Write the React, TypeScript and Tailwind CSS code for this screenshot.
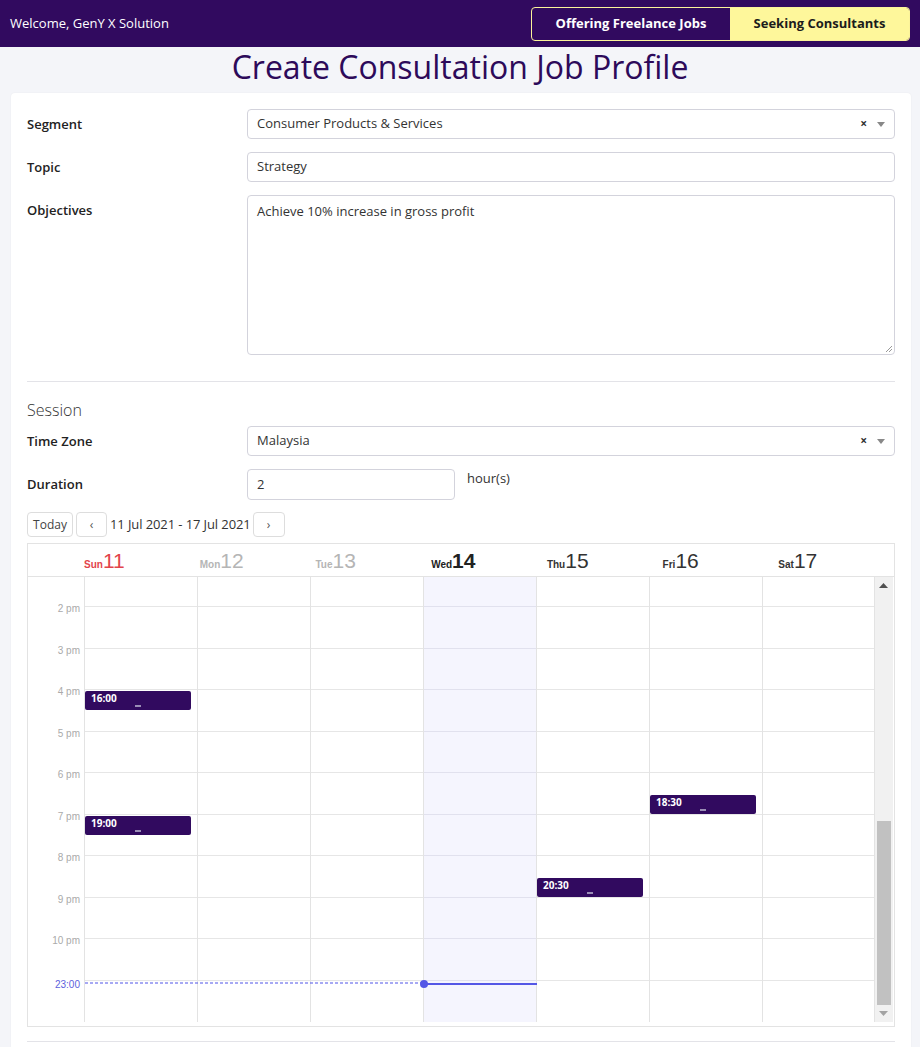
import React from "react";

const days = [
  { d: "Sun", n: "11", cls: "text-[#e2444b]", nCls: "font-light" },
  { d: "Mon", n: "12", cls: "text-[#b5b5b5]", nCls: "font-light" },
  { d: "Tue", n: "13", cls: "text-[#b5b5b5]", nCls: "font-light" },
  { d: "Wed", n: "14", cls: "text-[#222]", nCls: "font-bold" },
  { d: "Thu", n: "15", cls: "text-[#333]", nCls: "font-light" },
  { d: "Fri", n: "16", cls: "text-[#333]", nCls: "font-light" },
  { d: "Sat", n: "17", cls: "text-[#333]", nCls: "font-light" },
];

const hours = ["2 pm", "3 pm", "4 pm", "5 pm", "6 pm", "7 pm", "8 pm", "9 pm", "10 pm"];

const events: Record<number, { t: string; top: number }[]> = {
  0: [
    { t: "16:00", top: 114 },
    { t: "19:00", top: 239 },
  ],
  4: [{ t: "20:30", top: 301 }],
  5: [{ t: "18:30", top: 218 }],
};

function Field({ label, children }: { label: string; children: React.ReactNode }) {
  return (
    <div className="flex">
      <div className="w-[220px] shrink-0 text-[13px] font-semibold text-[#222] leading-[30px]">{label}</div>
      <div className="flex-1">{children}</div>
    </div>
  );
}

function Select({ value }: { value: string }) {
  return (
    <div className="h-[30px] border border-[#d3d3dc] rounded-[4px] flex items-center pl-[9px] pr-[9px] text-[13px] text-[#333]">
      <span className="flex-1">{value}</span>
      <span className="text-[12px] font-bold text-[#333] mr-[10px] leading-none">×</span>
      <svg width="8" height="5" viewBox="0 0 8 5"><path d="M0 0h8L4 5z" fill="#888" /></svg>
    </div>
  );
}

export default function App() {
  return (
    <div className="min-h-[1047px] bg-[#f4f5f9]" style={{ fontFamily: "'Open Sans', sans-serif" }}>
      <div className="h-[47px] bg-[#310a5f] flex items-center justify-between pl-[10px] pr-[10px]">
        <span className="text-white text-[13px] mt-[1px]">Welcome, GenY X Solution</span>
        <div className="flex h-[34px] rounded-[4px] overflow-hidden border border-[#fbf39a]">
          <div className="w-[198px] flex items-center justify-center text-white font-bold text-[13px]">Offering Freelance Jobs</div>
          <div className="w-[179px] flex items-center justify-center bg-[#fef79b] text-[#1c1c1c] font-bold text-[13px]">Seeking Consultants</div>
        </div>
      </div>

      <h1 className="text-center text-[32px] leading-[40px] text-[#2d0a5a] mb-[6px]">Create Consultation Job Profile</h1>

      <div className="ml-[11px] w-[900px] bg-white rounded-[4px] px-[16px] pt-[16px] pb-[10px] shadow-[0_0_2px_rgba(0,0,0,0.06)]">
        <div className="flex flex-col gap-[13px]">
          <Field label="Segment">
            <Select value="Consumer Products & Services" />
          </Field>
          <Field label="Topic">
            <div className="h-[30px] border border-[#d3d3dc] rounded-[4px] flex items-center px-[9px] text-[13px] text-[#333]">Strategy</div>
          </Field>
          <Field label="Objectives">
            <div className="relative h-[160px] border border-[#d3d3dc] rounded-[4px] px-[9px] pt-[6px] text-[13px] text-[#333]">
              Achieve 10% increase in gross profit
              <svg className="absolute right-[1px] bottom-[1px]" width="8" height="8" viewBox="0 0 8 8">
                <path d="M7 1L1 7M7 4L4 7" stroke="#999" strokeWidth="1" />
              </svg>
            </div>
          </Field>
        </div>

        <div className="border-t border-[#e3e3e8] mt-[26px]" />

        <div className="text-[16px] text-[#333] font-light mt-[17px] leading-[22px]">Session</div>

        <div className="flex flex-col gap-[13px] mt-[5px]">
          <Field label="Time Zone">
            <Select value="Malaysia" />
          </Field>
          <Field label="Duration">
            <div className="flex">
              <div className="w-[208px] h-[31px] border border-[#d3d3dc] rounded-[4px] flex items-center px-[9px] text-[13px] text-[#333]">2</div>
              <span className="ml-[12px] text-[13px] text-[#333] leading-[18px]">hour(s)</span>
            </div>
          </Field>
        </div>

        <div className="flex items-center mt-[12px] h-[25px] text-[12px] text-[#333]">
          <button className="h-[25px] w-[46px] border border-[#ddd] rounded-[4px] bg-white text-[12px] text-[#444]">Today</button>
          <button className="ml-[3px] h-[25px] w-[31px] border border-[#ddd] rounded-[4px] bg-white text-[12px] text-[#555] flex items-center justify-center">‹</button>
          <span className="ml-[3px] text-[13px] text-[#333] tracking-[-0.1px]">11 Jul 2021 - 17 Jul 2021</span>
          <button className="ml-[2px] h-[25px] w-[32px] border border-[#ddd] rounded-[4px] bg-white text-[12px] text-[#555] flex items-center justify-center">›</button>
        </div>

        <div className="mt-[6px] border border-[#e3e3e3] h-[484px]" style={{ fontFamily: "'Liberation Sans', Arial, sans-serif" }}>
          <div className="flex h-[33px] border-b border-[#e3e3e3]">
            <div className="w-[56px] shrink-0" />
            {days.map((d) => (
              <div key={d.d} className={`flex-1 flex items-baseline pt-[3px] ${d.cls}`}>
                <span className="text-[10px] font-bold">{d.d}</span>
                <span className={`text-[21px] leading-[28px] ${d.nCls}`}>{d.n}</span>
              </div>
            ))}
          </div>

          <div className="relative flex h-[445px] overflow-hidden">
            <div className="w-[56px] shrink-0 relative">
              <div className="h-[30px]" />
              {hours.map((h) => (
                <div key={h} className="h-[41.5px] text-right pr-[4px] text-[10px] text-[#aaa]">
                  <span className="relative top-[-6px]">{h}</span>
                </div>
              ))}
              <div className="h-[41.5px] text-right pr-[4px] text-[10px] text-[#5d5fdc]">
                <span className="relative top-[-4px]">23:00</span>
              </div>
            </div>
            {days.map((d, i) => (
              <div
                key={d.d}
                className={`relative w-[113px] shrink-0 border-l border-[#e3e3e3] ${i === 3 ? "bg-[#f5f5fe]" : ""} ${i === 6 ? "border-r" : ""}`}
              >
                <div className={`h-[30px] border-b ${i === 3 ? "border-[#e1e1ee]" : "border-[#e6e6e6]"}`} />
                {hours.map((h) => (
                  <div key={h} className={`h-[41.5px] border-b ${i === 3 ? "border-[#e1e1ee]" : "border-[#e6e6e6]"}`} />
                ))}
                {(events[i] || []).map((e) => (
                  <div
                    key={e.t}
                    className="absolute left-0 w-[106px] h-[19px] bg-[#310a5f] rounded-[2px] text-white text-[10px] font-bold pl-[6px] leading-[15px]"
                    style={{ top: e.top, fontFamily: "'Open Sans', sans-serif" }}
                  >
                    {e.t}
                    <div className="absolute left-[50px] bottom-[3px] w-[6px] h-[2px] bg-[#9a8db6]" />
                  </div>
                ))}
              </div>
            ))}
            <div className="w-[18px] shrink-0 bg-[#f1f1f1] relative">
              <svg className="absolute left-[4px] top-[6px]" width="9" height="5" viewBox="0 0 9 5"><path d="M4.5 0L9 5H0z" fill="#505050" /></svg>
              <div className="absolute left-[2px] right-[2px] top-[244px] h-[184px] bg-[#c1c1c1]" />
              <svg className="absolute left-[4px] bottom-[6px]" width="9" height="5" viewBox="0 0 9 5"><path d="M0 0h9L4.5 5z" fill="#a3a3a3" /></svg>
            </div>

            <svg className="absolute left-[57px] top-[405px]" width="339" height="2" viewBox="0 0 339 2">
              <line x1="0" y1="1" x2="339" y2="1" stroke="#4f52e8" strokeWidth="1" strokeDasharray="3 2" />
            </svg>
            <div className="absolute left-[396px] w-[113px] top-[406px] h-[2px] bg-[#5457e6]" />
            <div className="absolute left-[392px] top-[403px] w-[8px] h-[8px] rounded-full bg-[#5457e6]" />
          </div>
        </div>

        <div className="border-t border-[#e3e3e8] mt-[14px] h-[20px]" />
      </div>
    </div>
  );
}
